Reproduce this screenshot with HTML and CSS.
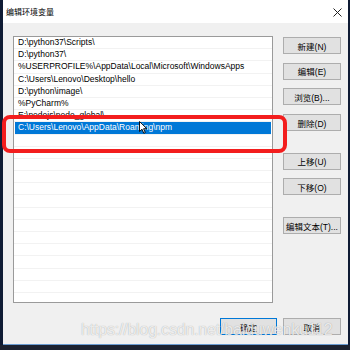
FILE: index.html
```html
<!DOCTYPE html>
<html lang="zh-CN">
<head>
    <meta charset="UTF-8">
    <title>编辑环境变量</title>
    <link rel="stylesheet" href="styles.css">
</head>
<body>

<div class="window">
    <div class="titlebar">
        <span class="title">编辑环境变量</span>
        <svg class="close" width="9" height="9" viewBox="0 0 9 9">
            <path d="M0.5 0.5 L8.5 8.5 M8.5 0.5 L0.5 8.5" stroke="#222" stroke-width="1" fill="none"/>
        </svg>
    </div>

    <div class="main">
        <div class="list">
            <div class="row">D:\python37\Scripts\</div>
            <div class="row">D:\python37\</div>
            <div class="row">%USERPROFILE%\AppData\Local\Microsoft\WindowsApps</div>
            <div class="row">C:\Users\Lenovo\Desktop\hello</div>
            <div class="row">D:\python\image\</div>
            <div class="row">%PyCharm%</div>
            <div class="row">E:\nodejs\node_global\</div>
            <div class="row selected">C:\Users\Lenovo\AppData\Roaming\npm</div>
            <div class="row"></div>
            <div class="row"></div>
            <div class="row"></div>
            <div class="row"></div>
            <div class="row"></div>
            <div class="row"></div>
            <div class="row"></div>
            <div class="row"></div>
            <div class="row"></div>
            <div class="row"></div>
            <div class="row"></div>
            <div class="row"></div>
            <div class="row"></div>
            <div class="row"></div>
        </div>

        <div class="side">
            <button>新建(N)</button>
            <button>编辑(E)</button>
            <button>浏览(B)...</button>
            <button>删除(D)</button>
            <button class="group">上移(U)</button>
            <button>下移(O)</button>
            <button class="group">编辑文本(T)...</button>
        </div>
    </div>

    <div class="footer">
        <button class="default">确定</button>
        <button>取消</button>
    </div>
</div>

<div class="bottom-strip"></div>

<!-- annotation, cursor and watermark lie over the dialog -->
<div class="highlight-box"></div>
<svg class="cursor" width="9" height="13" viewBox="0 0 9 13">
    <path d="M0.5 0.5 L0.5 10.5 L3 8.2 L4.8 12.3 L6.3 11.6 L4.6 7.7 L7.8 7.7 Z" fill="#fff" stroke="#000" stroke-width="0.9"/>
</svg>
<div class="watermark">https://blog.csdn.net/baiduwenku112</div>

</body>
</html>
```

FILE: styles.css
```css
body { margin: 0; width: 350px; height: 350px; overflow: hidden; background: #0f1b34; position: relative; font-family: "Liberation Sans", "Noto Sans CJK SC", sans-serif; font-size: 8.5px; color: #000; }
.window {
    margin-left: 3px; width: 345px; height: 345px; background: #f0f0f0;
    display: flex; flex-direction: column; box-sizing: border-box; border-bottom: 1px solid #6a9bd0;
}
.titlebar { height: 23px; background: #fff; display: flex; align-items: center; justify-content: space-between; padding: 0 6px 0 3px; flex-shrink: 0; }
.title { font-size: 8px; }
.close { margin-top: 1px; }

.main { display: flex; padding: 13px 0 0 10px; }
.list { width: 260px; height: 267px; box-sizing: border-box; border: 1px solid #9a9a9a; background: #fff; overflow: hidden; }
.row { height: 12.2px; box-sizing: border-box; border-bottom: 1px solid #f2f2f2; padding-left: 4px; line-height: 11px; white-space: nowrap; overflow: hidden; }
.row.selected { background: #0078d7; color: #fff; margin: 0 1px; padding-left: 3px; }

.side { margin-left: 10px; width: 58px; display: flex; flex-direction: column; gap: 8.7px; padding-top: 1px; }
.side .group { margin-top: 13px; }

button {
    height: 17px; width: 58px; padding: 0; box-sizing: border-box;
    background: #e1e1e1; border: 1px solid #adadad; border-radius: 0;
    font-family: "Liberation Sans", "Noto Sans CJK SC", sans-serif; font-size: 8.5px; color: #000;
}
button.default { width: 57px; border-color: #0078d7; }

.footer { display: flex; justify-content: flex-end; gap: 6px; margin-top: 15px; padding-right: 7px; }

.bottom-strip { height: 5px; background: #1c2230; }

.highlight-box {
    position: absolute; left: 2px; top: 115px; width: 285px; height: 38px;
    box-sizing: border-box; border: 4.5px solid #f31d1d; border-radius: 8px;
}
.cursor { position: absolute; left: 139px; top: 121px; }
.watermark {
    position: absolute; left: 81px; top: 321px; font-size: 16px; letter-spacing: -0.2px;
    color: rgba(255, 255, 255, 0.8); text-shadow: 0 0 1px rgba(0, 0, 0, 0.35);
}
```
